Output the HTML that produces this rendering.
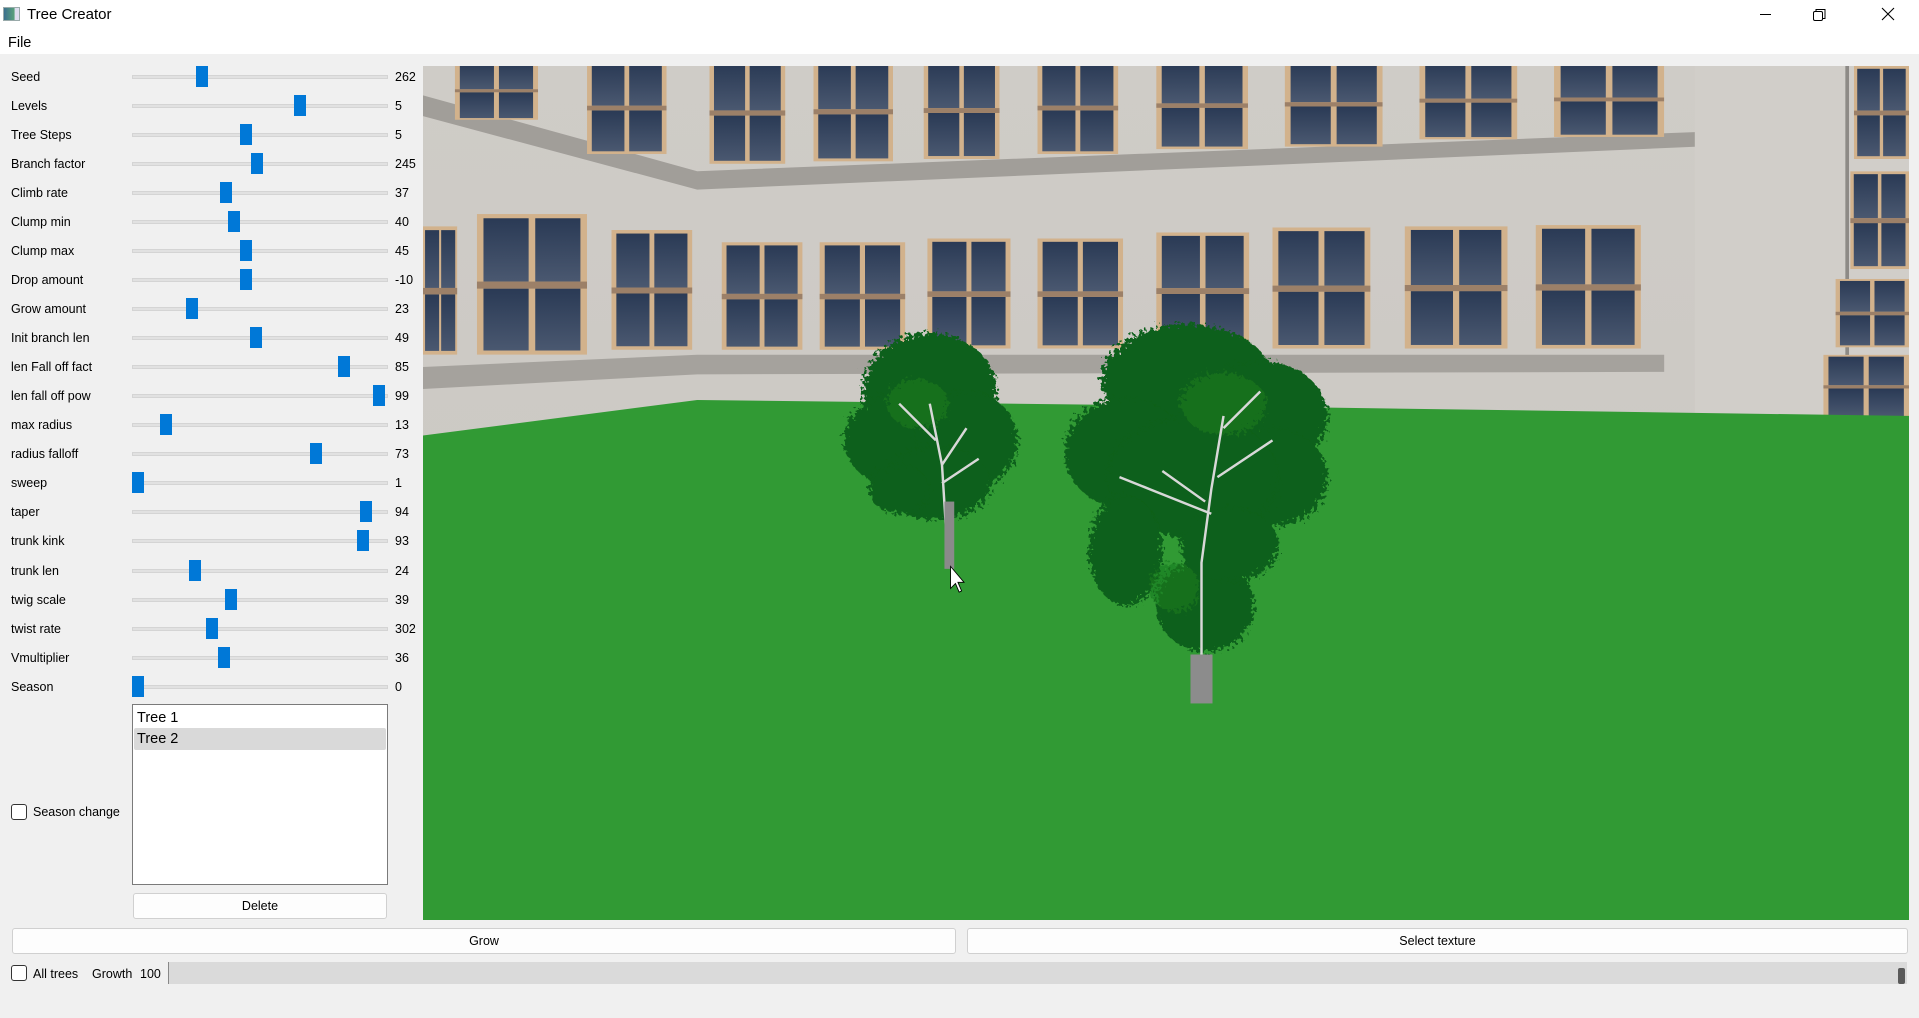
<!DOCTYPE html>
<html><head><meta charset="utf-8">
<style>
*{margin:0;padding:0;box-sizing:border-box}
body{width:1919px;height:1018px;background:#f0f0f0;font-family:"Liberation Sans",sans-serif;color:#000;position:relative;overflow:hidden;font-size:13px}
.a{position:absolute}
#top{left:0;top:0;width:1919px;height:54px;background:#fff}
.lbl{position:absolute;left:11px;font-size:12.5px;line-height:16px}
.grv{position:absolute;left:132px;width:256px;height:4px;background:#e1e1e1;border:1px solid #d4d4d4}
.hd{position:absolute;width:12px;height:21px;background:#0078d7}
.val{position:absolute;left:395px;font-size:12.5px;line-height:16px}
.btn{position:absolute;background:#fdfdfd;border:1px solid #d0d0d0;border-radius:3px;text-align:center;font-size:12.5px}
.cb{position:absolute;width:16px;height:16px;border:1px solid #333;border-radius:3px;background:#fff}
</style></head><body>
<div id="top" class="a"></div>
<div class="a" style="left:3px;top:7px;width:17px;height:14px;border:1px solid #9aa;background:linear-gradient(90deg,#3b6f8e,#5aa27a 70%,#dde 72%)"></div>
<div class="a" style="left:27px;top:5px;font-size:15px;line-height:20px">Tree Creator</div>
<div class="a" style="left:8px;top:33px;font-size:14.5px;line-height:20px">File</div>
<svg class="a" style="left:1760px;top:4px" width="150" height="22"><path d="M0 10.5h11" stroke="#000" stroke-width="1"/><rect x="53.5" y="7.5" width="9" height="9" rx="1.5" fill="none" stroke="#000"/><path d="M56 7.5V5.5h9v9h-2" fill="none" stroke="#000"/><path d="M122 4l12 12M134 4l-12 12" stroke="#000" stroke-width="1.1"/></svg>

<div id="sl"></div>

<div class="a" style="left:132px;top:704px;width:256px;height:181px;background:#fff;border:1px solid #7a7a7a"></div>
<div class="a" style="left:134px;top:728px;width:252px;height:22px;background:#d9d9d9;border-radius:2px"></div>
<div class="a" style="left:137px;top:708px;font-size:14.5px;line-height:20px">Tree 1</div>
<div class="a" style="left:137px;top:729px;font-size:14.5px;line-height:20px">Tree 2</div>
<div class="cb" style="left:11px;top:804px"></div>
<div class="a" style="left:33px;top:804px;font-size:12.5px;line-height:16px">Season change</div>
<div class="btn" style="left:133px;top:893px;width:254px;height:26px;line-height:24px">Delete</div>
<div class="btn" style="left:12px;top:928px;width:944px;height:26px;line-height:24px">Grow</div>
<div class="btn" style="left:967px;top:928px;width:941px;height:26px;line-height:24px">Select texture</div>
<div class="cb" style="left:11px;top:965px"></div>
<div class="a" style="left:33px;top:966px;font-size:12.5px;line-height:16px">All trees</div>
<div class="a" style="left:92px;top:966px;font-size:12.5px;line-height:16px">Growth</div>
<div class="a" style="left:140px;top:966px;font-size:12.5px;line-height:16px">100</div>
<div class="a" style="left:168px;top:962px;width:1739px;height:22px;background:#dadada;border-left:1px solid #888"></div>
<div class="a" style="left:1898px;top:968px;width:7px;height:16px;background:#5a5a5a;border-radius:2px"></div>

<svg class="a" style="left:423px;top:66px" width="1486" height="854" viewBox="346 54 1214 698" preserveAspectRatio="none">
<defs>
<linearGradient id="pg" x1="0" y1="0" x2="0" y2="1"><stop offset="0" stop-color="#2a3a55"/><stop offset="1" stop-color="#4a5870"/></linearGradient>
<linearGradient id="wg" x1="0" y1="0" x2="0" y2="1"><stop offset="0" stop-color="#cfccc7"/><stop offset=".7" stop-color="#cbc8c3"/><stop offset="1" stop-color="#bdbab5"/></linearGradient>
<symbol id="w" viewBox="0 0 100 100" preserveAspectRatio="none">
<rect width="100" height="100" fill="#d2b28c"/>
<rect x="6" y="3" width="41" height="45" fill="url(#pg)"/><rect x="53" y="3" width="41" height="45" fill="url(#pg)"/>
<rect x="6" y="53" width="41" height="44" fill="url(#pg)"/><rect x="53" y="53" width="41" height="44" fill="url(#pg)"/>
<rect x="0" y="48" width="100" height="5" fill="#9c8068"/>
</symbol>
<filter id="lf" x="-10%" y="-10%" width="120%" height="120%"><feTurbulence type="fractalNoise" baseFrequency="0.35" numOctaves="2" seed="3"/><feDisplacementMap in="SourceGraphic" scale="14"/></filter>
</defs>
<rect x="346" y="54" width="1214" height="698" fill="url(#wg)"/>
<rect x="1385" y="54" width="175" height="300" fill="#d1cec9"/>
<polygon points="346,78 570,140 1385,108 1385,120 570,155 346,95" fill="#a19e99"/>
<polygon points="346,300 570,290 1360,290 1360,304 570,306 346,318" fill="#a5a29d"/>
<use href="#w" x="372" y="50" width="68" height="48"/>
<use href="#w" x="480" y="50" width="65" height="76"/>
<use href="#w" x="580" y="50" width="62" height="84"/>
<use href="#w" x="665" y="50" width="65" height="82"/>
<use href="#w" x="755" y="50" width="62" height="80"/>
<use href="#w" x="848" y="50" width="66" height="76"/>
<use href="#w" x="945" y="50" width="75" height="72"/>
<use href="#w" x="1050" y="50" width="80" height="70"/>
<use href="#w" x="1160" y="50" width="80" height="64"/>
<use href="#w" x="1270" y="50" width="90" height="62"/>
<use href="#w" x="346" y="185" width="28" height="105"/>
<use href="#w" x="390" y="175" width="90" height="115"/>
<use href="#w" x="500" y="188" width="66" height="98"/>
<use href="#w" x="590" y="198" width="66" height="88"/>
<use href="#w" x="670" y="198" width="70" height="88"/>
<use href="#w" x="758" y="195" width="68" height="90"/>
<use href="#w" x="848" y="195" width="70" height="90"/>
<use href="#w" x="945" y="190" width="76" height="95"/>
<use href="#w" x="1040" y="186" width="80" height="99"/>
<use href="#w" x="1148" y="185" width="84" height="100"/>
<use href="#w" x="1255" y="184" width="86" height="101"/>
<rect x="1508" y="54" width="3" height="290" fill="#8d8a86"/>
<use href="#w" x="1515" y="54" width="45" height="76"/>
<use href="#w" x="1512" y="140" width="48" height="80"/>
<use href="#w" x="1500" y="228" width="60" height="56"/>
<use href="#w" x="1490" y="290" width="70" height="52"/>
<polygon points="346,356 570,327 1000,332 1560,340 1560,752 346,752" fill="#319a34"/>
<g filter="url(#lf)">
<g fill="#11611a">
<ellipse cx="760" cy="320" rx="55" ry="48"/><ellipse cx="740" cy="360" rx="50" ry="40"/><ellipse cx="790" cy="360" rx="42" ry="40"/>
<ellipse cx="765" cy="395" rx="45" ry="30"/><ellipse cx="735" cy="400" rx="25" ry="20"/>
<ellipse cx="970" cy="310" rx="70" ry="45"/><ellipse cx="1030" cy="340" rx="55" ry="45"/><ellipse cx="920" cy="370" rx="50" ry="45"/>
<ellipse cx="1040" cy="390" rx="45" ry="40"/><ellipse cx="975" cy="390" rx="70" ry="50"/><ellipse cx="920" cy="450" rx="30" ry="45"/>
<ellipse cx="985" cy="495" rx="40" ry="38"/><ellipse cx="1005" cy="445" rx="40" ry="30"/>
</g>
<g fill="#1a7a22" opacity=".6"><ellipse cx="750" cy="330" rx="25" ry="20"/><ellipse cx="1000" cy="330" rx="35" ry="25"/><ellipse cx="960" cy="480" rx="20" ry="20"/></g>
</g>
<g stroke="#d8d8d8" stroke-width="2" fill="none">
<path d="M775 460 L770 380 L760 330 M770 380 L790 350 M765 360 L735 330 M770 395 L800 375"/>
<path d="M982 570 L982 460 L990 400 L1000 340 M990 420 L940 400 L915 390 M985 410 L950 385 M995 390 L1040 360 M1000 350 L1030 320"/>
</g>
<rect x="772" y="410" width="8" height="55" fill="#8a8a8a"/>
<rect x="973" y="535" width="18" height="40" fill="#8c8c8c"/>
<path d="M777 463 l0 18 l4 -4 l3 7 l2 -1 l-3 -7 l5 0 z" fill="#fff" stroke="#000" stroke-width=".7"/>
</svg>

<script>
var d=[["Seed",262,202],["Levels",5,300],["Tree Steps",5,246],["Branch factor",245,257],["Climb rate",37,226],["Clump min",40,234],["Clump max",45,246],["Drop amount",-10,246],["Grow amount",23,192],["Init branch len",49,256],["len Fall off fact",85,344],["len fall off pow",99,379],["max radius",13,166],["radius falloff",73,316],["sweep",1,138],["taper",94,366],["trunk kink",93,363],["trunk len",24,195],["twig scale",39,231],["twist rate",302,212],["Vmultiplier",36,224],["Season",0,138]];
var h="";d.forEach(function(r,i){var y=77+i*29.03;
h+='<div class="lbl" style="top:'+(y-8)+'px">'+r[0]+'</div><div class="grv" style="top:'+(y-2)+'px"></div><div class="hd" style="left:'+(r[2]-6)+'px;top:'+(y-11)+'px"></div><div class="val" style="top:'+(y-8)+'px">'+r[1]+'</div>';});
document.getElementById("sl").innerHTML=h;
</script>
</body></html>
